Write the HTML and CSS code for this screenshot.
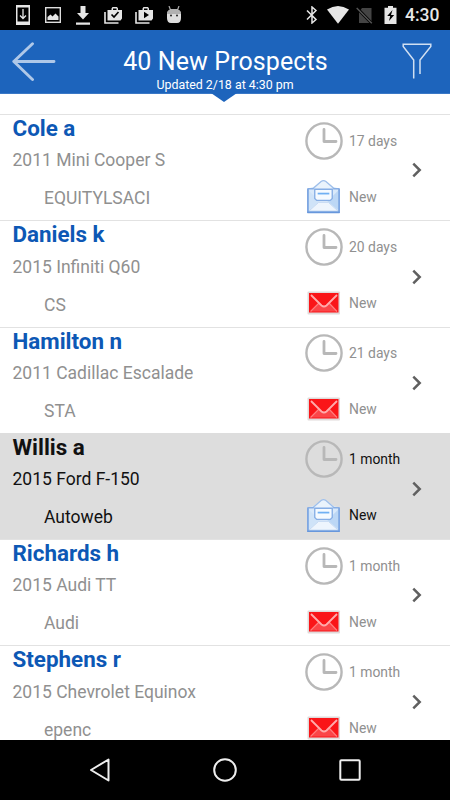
FILE: index.html
```html
<!DOCTYPE html>
<html lang="en">
<head>
    <meta charset="UTF-8">
    <meta name="viewport" content="width=device-width, initial-scale=1.0">
    <title>New Prospects</title>
    <link rel="stylesheet" href="styles.css">
</head>
<body>
    <!-- Shared icons -->
    <svg class="sprite" width="0" height="0">
        <symbol id="clock" viewBox="0 0 38 38">
            <circle cx="19" cy="19" r="17.6" fill="none" stroke="#b8b8b8" stroke-width="2.4"/>
            <path d="M19 7.5V19.5H31" fill="none" stroke="#b8b8b8" stroke-width="2.8" stroke-linecap="round" stroke-linejoin="round"/>
        </symbol>
        <symbol id="mail-open" viewBox="0 0 36 36">
            <path d="M1.5 10L8 8L15 2.5Q18 .5 21 2.5L28 8L34.5 10V34.5H1.5Z" fill="#d9e9fa"/>
            <path d="M7 10L15.5 2.5Q18 .8 20.5 2.5L29 10" fill="#eaf3fc" stroke="#9fbfea" stroke-width="1.3"/>
            <path d="M2 10V34H34V10" fill="none" stroke="#7da6e2" stroke-width="1.9"/>
            <path d="M1.5 10H8M28 10H34.5" stroke="#88aee4" stroke-width="1.5"/>
            <path d="M3 12L14 23L3 32Z" fill="#cfe3f8"/>
            <path d="M33 12L22 23L33 32Z" fill="#bcd7f5"/>
            <path d="M3 33L13 24H23L33 33Z" fill="#eef5fd" stroke="#c3d8f2" stroke-width="1"/>
            <path d="M9 10.5H27V20L25 22H11L9 20Z" fill="#f5faff" stroke="#86aee5" stroke-width="1.4"/>
            <path d="M12 15H24" stroke="#6fb0f3" stroke-width="1.8"/>
            <path d="M1.5 34.3H34.5" stroke="#6797dc" stroke-width="1.6"/>
        </symbol>
        <symbol id="mail-new" viewBox="0 0 34 24">
            <rect x=".5" y=".5" width="32.5" height="23" rx="1" fill="#e0dada"/>
            <rect x="2" y="2" width="29.5" height="19.5" fill="#fa1518"/>
            <path d="M3.5 20.5L12 12L17 16L22 12L30 20.5Z" fill="#fb4548"/>
            <path d="M3.5 20.5L12 12M30 20.5L22 12" fill="none" stroke="#ff7c7c" stroke-width="1.2"/>
            <path d="M4 4L14.500 14.500Q17 16.500 19.500 14.500L30 4" fill="none" stroke="#ffabab" stroke-width="1.8"/>
        </symbol>
        <symbol id="chevron" viewBox="0 0 10 16">
            <path d="M1.3 1.7L7.7 8L1.3 14.3" fill="none" stroke="#606060" stroke-width="2.5"/>
        </symbol>
    </svg>

    <div class="statusbar">
        <div class="notifications">
            <svg width="14" height="20" viewBox="0 0 14 20"><path d="M0 0H14V20H0ZM1.5 2.5V16.5H12.5V2.5Z" fill="#e6e6e6" fill-rule="evenodd"/><path d="M7 4V13M4 10.5L7 13.5L10 10.5" fill="none" stroke="#e6e6e6" stroke-width="1.3"/></svg>
            <svg class="photo" width="16" height="16" viewBox="0 0 16 16"><rect x=".7" y=".7" width="14.6" height="14.6" fill="none" stroke="#ddd" stroke-width="1.4"/><path d="M2.5 13V10L5.5 7.5L7.5 9.5L10.5 6.5L13.5 9.5V13Z" fill="#e6e6e6"/></svg>
            <svg width="14" height="19" viewBox="0 0 14 19"><path d="M4.5 0H9.5V7H13L7 13.5L1 7H4.5ZM0 16.5H14V18.7H0Z" fill="#e6e6e6"/></svg>
            <svg width="18" height="17" viewBox="0 0 18 17"><path d="M1 5V16H14.5" fill="none" stroke="#e6e6e6" stroke-width="1.6"/><path d="M3.5 3H7.5V1.5L8.5 0H13L14 1.5V3H18V11.5L16.5 13.5H3.5ZM9 3H12.5V1.5H9Z" fill="#e6e6e6" fill-rule="evenodd"/><path d="M7.5 7.5L10 10L14.5 5" fill="none" stroke="#000" stroke-width="1.7"/></svg>
            <svg class="play" width="18" height="17" viewBox="0 0 18 17"><path d="M1 5V16H14.5" fill="none" stroke="#e6e6e6" stroke-width="1.6"/><path d="M3.5 3H7.5V1.5L8.5 0H13L14 1.5V3H18V11.5L16.5 13.5H3.5ZM9 3H12.5V1.5H9Z" fill="#e6e6e6" fill-rule="evenodd"/><path d="M9 4.8L14 8L9 11.2Z" fill="#000"/></svg>
            <svg width="16" height="18" viewBox="0 0 16 18"><path d="M3 0L4.5 4M13 0L11.5 4" stroke="#aaa" stroke-width="1.2"/><path d="M1 8Q1 3 8 3T15 8V12Q15 17 11 17H5Q1 17 1 12Z" fill="#ddd"/><path d="M1 8Q1 3 8 3T15 8Z" fill="#b0b0b0"/><circle cx="5" cy="9.5" r="1" fill="#222"/><circle cx="11" cy="9.5" r="1" fill="#222"/></svg>
        </div>
        <div class="system">
            <svg width="12" height="18" viewBox="0 0 12 18"><path d="M1 4.5L10 13.5L6 17V1L10 4.5L1 13.5" fill="none" stroke="#e6e6e6" stroke-width="1.5"/></svg>
            <svg class="wifi" width="22" height="18" viewBox="0 0 22 18"><path d="M0 3.5Q11-3.5 22 3.5L11 17.7Z" fill="#e6e6e6"/></svg>
            <svg class="sim" width="17" height="17" viewBox="0 0 17 17"><path d="M6 1H15.5V16H3V5Z" fill="#444"/><path d="M0 0L16 16.5" stroke="#000" stroke-width="3"/><path d="M.7 1L15.8 16.3" stroke="#555" stroke-width="1.4"/></svg>
            <svg class="battery" width="13" height="18" viewBox="0 0 12 18"><path d="M3.5 0H8.5V1.7H12V18H0V1.7H3.5Z" fill="#e6e6e6"/><path d="M8 4L2.7 10H5.7L4.5 15L9.7 9H6.5Z" fill="#000"/></svg>
            <span class="time">4:30</span>
        </div>
    </div>

    <header class="header">
        <svg class="back" width="44" height="40" viewBox="0 0 44 40"><path d="M42 19.5H1.8M20.5 1.8L1.8 19.5L20.5 37.5" fill="none" stroke="#afc8e8" stroke-width="2.9" stroke-linecap="round" stroke-linejoin="round"/></svg>
        <div class="heading">
            <h1>40 New Prospects</h1>
            <p>Updated 2/18 at 4:30 pm</p>
        </div>
        <svg class="filter" width="30" height="37" viewBox="0 0 30 37"><path d="M11.7 35.5V17L1.2 3.5V1.2H28.8V3.5L18 17V31" fill="none" stroke="#d0dff2" stroke-width="1.5"/></svg>
        <span class="pointer"></span>
    </header>

    <main class="list">
        <div class="row">
            <div class="info">
                <h2>Cole a</h2>
                <p class="vehicle">2011 Mini Cooper S</p>
                <p class="source">EQUITYLSACI</p>
            </div>
            <div class="status">
                <svg class="clock"><use href="#clock"/></svg><span>17 days</span>
                <svg class="mail-open"><use href="#mail-open"/></svg><span>New</span>
            </div>
            <svg class="chevron"><use href="#chevron"/></svg>
        </div>
        <div class="row">
            <div class="info">
                <h2>Daniels k</h2>
                <p class="vehicle">2015 Infiniti Q60</p>
                <p class="source">CS</p>
            </div>
            <div class="status">
                <svg class="clock"><use href="#clock"/></svg><span>20 days</span>
                <svg class="mail-new"><use href="#mail-new"/></svg><span>New</span>
            </div>
            <svg class="chevron"><use href="#chevron"/></svg>
        </div>
        <div class="row">
            <div class="info">
                <h2>Hamilton n</h2>
                <p class="vehicle">2011 Cadillac Escalade</p>
                <p class="source">STA</p>
            </div>
            <div class="status">
                <svg class="clock"><use href="#clock"/></svg><span>21 days</span>
                <svg class="mail-new"><use href="#mail-new"/></svg><span>New</span>
            </div>
            <svg class="chevron"><use href="#chevron"/></svg>
        </div>
        <div class="row selected">
            <div class="info">
                <h2>Willis a</h2>
                <p class="vehicle">2015 Ford F-150</p>
                <p class="source">Autoweb</p>
            </div>
            <div class="status">
                <svg class="clock"><use href="#clock"/></svg><span>1 month</span>
                <svg class="mail-open"><use href="#mail-open"/></svg><span>New</span>
            </div>
            <svg class="chevron"><use href="#chevron"/></svg>
        </div>
        <div class="row">
            <div class="info">
                <h2>Richards h</h2>
                <p class="vehicle">2015 Audi TT</p>
                <p class="source">Audi</p>
            </div>
            <div class="status">
                <svg class="clock"><use href="#clock"/></svg><span>1 month</span>
                <svg class="mail-new"><use href="#mail-new"/></svg><span>New</span>
            </div>
            <svg class="chevron"><use href="#chevron"/></svg>
        </div>
        <div class="row">
            <div class="info">
                <h2>Stephens r</h2>
                <p class="vehicle">2015 Chevrolet Equinox</p>
                <p class="source">epenc</p>
            </div>
            <div class="status">
                <svg class="clock"><use href="#clock"/></svg><span>1 month</span>
                <svg class="mail-new"><use href="#mail-new"/></svg><span>New</span>
            </div>
            <svg class="chevron"><use href="#chevron"/></svg>
        </div>
    </main>

    <nav class="navbar">
        <svg width="24" height="26" viewBox="0 0 24 26"><path d="M21.5 2.5V23.500L4 13Z" fill="none" stroke="#eee" stroke-width="2" stroke-linejoin="round"/></svg>
        <svg width="24" height="24" viewBox="0 0 24 24"><circle cx="12" cy="12" r="10.8" fill="none" stroke="#eee" stroke-width="2"/></svg>
        <svg width="22" height="22" viewBox="0 0 22 22"><rect x="1.3" y="1.3" width="19.4" height="19.4" rx="1" fill="none" stroke="#eee" stroke-width="2"/></svg>
    </nav>
</body>
</html>
```
FILE: styles.css
```css
* {
    box-sizing: border-box;
    margin: 0;
    padding: 0;
}
body {
    width: 450px;
    height: 800px;
    overflow: hidden;
    display: flex;
    flex-direction: column;
    background-color: #fff;
    font-family: Roboto, "Liberation Sans", sans-serif;
}
svg {
    display: block;
    flex: none;
}
.sprite {
    position: absolute;
}

/* Status bar */
.statusbar {
    height: 30px;
    flex: none;
    display: flex;
    justify-content: space-between;
    padding: 0 11px 0 16px;
    background-color: #000;
}
.notifications, .system {
    display: flex;
    align-items: center;
}
.notifications {
    gap: 14px;
}
.photo {
    margin: 0 1px;
}
.play {
    margin: 0 -1px;
}
.wifi {
    margin-left: 9px;
}
.sim {
    margin-left: 7px;
}
.battery {
    margin-left: 11px;
}
.time {
    margin-left: 8px;
    width: 34px;
    color: #e6e6e6;
    font-size: 17.5px;
    font-weight: 500;
    white-space: nowrap;
}

/* Header */
.header {
    position: relative;
    height: 64px;
    flex: none;
    display: grid;
    grid-template-columns: 44px 1fr 44px;
    align-items: start;
    padding: 12px 12px 0;
    background-color: #1d64bc;
    color: #fff;
    border-bottom: 1px solid #3a78c6;
}
.filter {
    margin: 1px 0 0 7.5px;
}
.heading {
    text-align: center;
    padding-top: 4px;
}
.heading h1 {
    font-size: 25px;
    font-weight: 400;
    line-height: 32px;
    letter-spacing: 0.1px;
    padding-left: 1px;
}
.heading p {
    font-size: 12.4px;
    line-height: 14px;
}
.pointer {
    position: absolute;
    left: 211px;
    top: 63px;
    border: solid transparent;
    border-width: 9px 13px 0;
    border-top-color: #1d64bc;
}

/* Prospect list */
.list {
    height: 646px;
    flex: none;
    padding-top: 20px;
    overflow: hidden;
}
.row {
    height: 106.25px;
    display: flex;
    align-items: flex-start;
    border-top: 1px solid #e2e2e2;
    color: #909090;
}
.info {
    width: 304px;
    padding-left: 12.5px;
}
.info h2 {
    color: #0d58b5;
    font-size: 22.4px;
    font-weight: 700;
    line-height: 27.5px;
}
.vehicle, .source {
    font-size: 17.5px;
    line-height: 22px;
    white-space: nowrap;
}
.vehicle {
    margin-top: 6.8px;
}
.source {
    margin-top: 16px;
    padding-left: 31.5px;
}
.status {
    width: 106px;
    padding-top: 6px;
    display: grid;
    grid-template-columns: 39px auto;
    grid-template-rows: 39px 36px;
    row-gap: 18.5px;
    column-gap: 6px;
    align-items: center;
    justify-items: start;
    font-size: 13.9px;
    white-space: nowrap;
}
.status svg {
    justify-self: center;
}
.clock {
    width: 38px;
    height: 38px;
}
.mail-open {
    width: 35px;
    height: 35px;
}
.mail-new {
    width: 34px;
    height: 24px;
}
.chevron {
    width: 10px;
    height: 16px;
    margin: 47.3px 0 0 1.5px;
}
.selected {
    background-color: #ddd;
    border-color: #ddd;
    color: #111;
}
.selected h2 {
    color: #111;
}

/* Navigation buttons */
.navbar {
    height: 60px;
    flex: none;
    display: flex;
    justify-content: space-between;
    align-items: center;
    padding: 0 89px 0 87px;
    background-color: #000;
}
```
